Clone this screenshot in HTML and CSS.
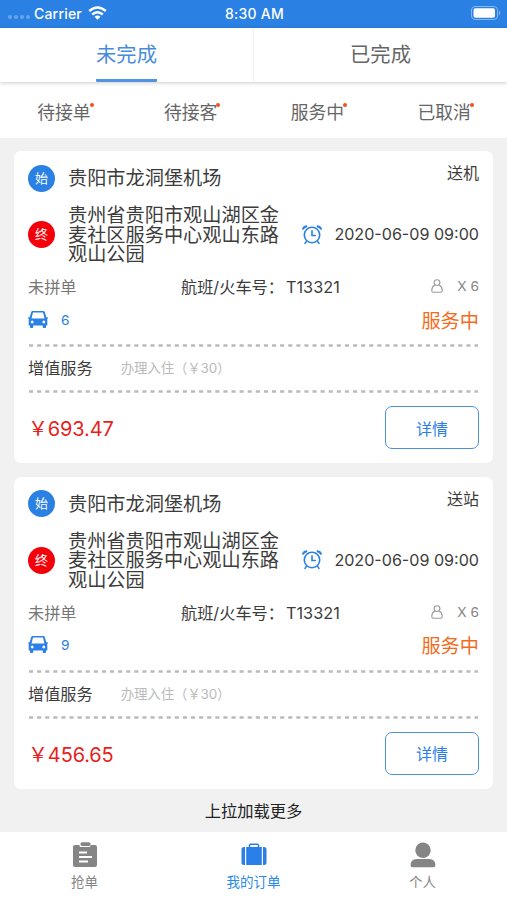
FILE: index.html
```html
<!DOCTYPE html>
<html lang="zh-CN">
<head>
<meta charset="utf-8">
<title>我的订单</title>
<link rel="stylesheet" href="styles.css">
</head>
<body>
<svg class="defs" width="0" height="0">
  <symbol id="clock" viewBox="0 0 20 20">
    <g fill="none" stroke="#2a80e6" stroke-width="1.6" stroke-linecap="round">
      <circle cx="10" cy="10" r="7.700"/>
      <path d="M10 5.800v4.700h3.400M4.200 16.600l-1.200 1.800M15.800 16.600l1.200 1.800"/>
      <path d="M1.200 3.600Q2 1.700 4.200 1.400M18.800 3.600Q18 1.700 15.800 1.400" stroke-width="2.300"/>
    </g>
  </symbol>
  <symbol id="car" viewBox="0 0 20 18">
    <path fill="#2a80e6" fill-rule="evenodd" d="M4.600 0h10.800q1.100 0 1.400 1l1.500 5.200h1.500v1.600h-.9q.4.500.4 1.200V14.600H18v1.600q0 .8-.8.8h-1.600q-.8 0-.8-.8v-1.600H5.200v1.600q0 .8-.8.8H2.800q-.8 0-.8-.8v-1.600H.7V9q0-.7.400-1.200H.2V6.200h1.500L3.200 1q.3-1 1.400-1zM5 1.600L3.500 7.400h13L15 1.600zM4.200 9.600a1.400 1.400 0 1 0 .01 0zM15.800 9.600a1.400 1.400 0 1 0 .01 0z"/>
  </symbol>
  <symbol id="rider" viewBox="0 0 12 14">
    <g fill="none" stroke="#999" stroke-width="1.100"><circle cx="6" cy="3.600" r="2.900"/><path d="M3.800 6.300Q.8 7.600.8 11v.8q0 1.400 1.400 1.400h7.600q1.400 0 1.400-1.400V11q0-3.400-3-4.700"/></g>
  </symbol>
</svg>
<header class="status">
  <div class="carrier"><i class="signal"><b></b><b></b><b></b><b></b></i><span>Carrier</span>
    <svg width="19" height="14" viewBox="0 0 19 14"><g fill="none" stroke="#fff" stroke-width="2.500"><path d="M1.200 5Q9.500-2 17.800 5"/><path d="M4.200 8.500Q9.500 4 14.800 8.500"/></g><path fill="#fff" d="M6.500 10.700Q9.500 8.300 12.500 10.700L9.500 13.700z"/></svg>
  </div>
  <div class="time">8:30 AM</div>
  <svg class="battery" width="30" height="14" viewBox="0 0 30 14"><rect x=".5" y=".5" width="26" height="13" rx="3.500" fill="none" stroke="#86b7f0"/><rect x="2.500" y="2.200" width="21.500" height="9.600" rx="1.800" fill="#fff"/><path d="M28 4.500q2.600 2.500 0 5z" fill="#86b7f0"/></svg>
</header>
<nav class="tabs"><div class="tab active"><span>未完成</span></div><div class="tab"><span>已完成</span></div></nav>
<nav class="filters"><div><span>待接单</span></div><div><span>待接客</span></div><div><span>服务中</span></div><div><span>已取消</span></div></nav>
<main>
  <article class="card">
    <div class="start"><i class="mark">始</i><span class="place">贵阳市龙洞堡机场</span><span class="kind">送机</span></div>
    <div class="end"><i class="mark red">终</i><span class="place">贵州省贵阳市观山湖区金麦社区服务中心观山东路观山公园</span><svg class="clock"><use href="#clock"/></svg><time>2020-06-09 09:00</time></div>
    <div class="trip"><span class="pool">未拼单</span><span class="flight">航班/火车号：<em>T13321</em></span><span class="count"><svg width="12" height="14"><use href="#rider"/></svg>X 6</span></div>
    <div class="seats"><svg width="20" height="18"><use href="#car"/></svg><span>6</span><strong>服务中</strong></div>
    <svg class="dash" width="451" height="3"><path d="M1 1.500H450"/></svg>
    <div class="extra"><span>增值服务</span><small>办理入住（￥30）</small></div>
    <svg class="dash" width="451" height="3"><path d="M1 1.500H450"/></svg>
    <div class="foot"><span class="price"><i>￥</i>693.47</span><button>详情</button></div>
  </article>
  <article class="card">
    <div class="start"><i class="mark">始</i><span class="place">贵阳市龙洞堡机场</span><span class="kind">送站</span></div>
    <div class="end"><i class="mark red">终</i><span class="place">贵州省贵阳市观山湖区金麦社区服务中心观山东路观山公园</span><svg class="clock"><use href="#clock"/></svg><time>2020-06-09 09:00</time></div>
    <div class="trip"><span class="pool">未拼单</span><span class="flight">航班/火车号：<em>T13321</em></span><span class="count"><svg width="12" height="14"><use href="#rider"/></svg>X 6</span></div>
    <div class="seats"><svg width="20" height="18"><use href="#car"/></svg><span>9</span><strong>服务中</strong></div>
    <svg class="dash" width="451" height="3"><path d="M1 1.500H450"/></svg>
    <div class="extra"><span>增值服务</span><small>办理入住（￥30）</small></div>
    <svg class="dash" width="451" height="3"><path d="M1 1.500H450"/></svg>
    <div class="foot"><span class="price"><i>￥</i>456.65</span><button>详情</button></div>
  </article>
  <p class="more">上拉加载更多</p>
</main>
<nav class="bottom">
  <div><svg width="26" height="26" viewBox="0 0 26 26"><path fill="#858585" fill-rule="evenodd" d="M3 3h4.500v.5q0 1.500 1.500 1.500h8q1.500 0 1.500-1.500V3H23q2 0 2 2v18q0 2-2 2H3q-2 0-2-2V5q0-2 2-2zM7 9.500v2h8v-2zM7 14v2h13v-2zM7 18.500v2h9v-2z"/><rect x="8.500" y=".3" width="10" height="3.700" rx="1.700" fill="#858585"/></svg><span>抢单</span></div>
  <div class="active"><svg width="26" height="26" viewBox="0 0 26 26"><g fill="#2a80e6"><path d="M4 5v18H3q-2.500 0-2.500-2.500v-13Q.5 5 3 5zM22 5v18h1q2.500 0 2.500-2.500v-13Q25.500 5 23 5z"/><rect x="5.200" y="5" width="15.600" height="18"/></g><path d="M8.500 5V3.300q0-1 1-1h7q1 0 1 1V5" fill="none" stroke="#2a80e6" stroke-width="1.500"/></svg><span>我的订单</span></div>
  <div><svg width="26" height="26" viewBox="0 0 26 26"><circle cx="13" cy="8.200" r="7.700" fill="#858585"/><path d="M.6 23.500Q.6 17 6.500 17h13q5.900 0 5.900 6.500 0 1.700-1.700 1.700H2.300q-1.700 0-1.700-1.700z" fill="#858585"/></svg><span>个人</span></div>
</nav>
</body>
</html>
```
FILE: styles.css
```css
* { box-sizing: border-box; }
body { margin: 0; width: 507px; height: 900px; overflow: hidden; display: flex; flex-direction: column; background: #f1f1f1; color: #3c3c3c; font-family: Inter, "Noto Sans CJK SC", sans-serif; }
i, em { font-style: normal; }
svg { display: block; flex: none; }
.defs { position: absolute; }
.status { height: 28px; flex: none; background: #2a80e3; color: #fff; display: grid; grid-template-columns: 1fr auto 1fr; align-items: center; padding: 0 6px 2px 8px; font-size: 14px; font-weight: 500; }
.time { letter-spacing: .25px; }
.carrier { display: flex; align-items: center; letter-spacing: .2px; }
.carrier svg { margin-left: 6px; }
.signal { display: flex; gap: 2px; width: 26px; padding-top: 8px; }
.signal b { width: 4px; height: 4px; border-radius: 50%; background: #6aa5ea; }
.battery { justify-self: end; }
.tabs { height: 54px; flex: none; display: flex; background: #fff; box-shadow: 0 1px 4px #0003; z-index: 1; }
.tab { flex: 1; display: flex; justify-content: center; font-size: 20.300px; color: #666; }
.tab + .tab { border-left: 1px solid #f0f0f0; }
.tab span { line-height: 53px; height: 54px; }
.tab.active { color: #478bdc; }
.tab.active span { border-bottom: 3px solid #5093e2; border-radius: 1px; }
.filters { height: 56px; flex: none; background: #fff; display: flex; font-size: 17.800px; color: #666; }
.filters div { flex: 1; text-align: center; line-height: 61px; padding-left: 1px; }
.filters span { position: relative; }
.filters span::after { content: ""; position: absolute; width: 4px; height: 4px; right: -3px; top: 1px; border-radius: 50%; background: #f4511e; }
main { flex: 1; min-height: 0; padding: 13px 14px 0; }
.card { height: 312px; background: #fff; border-radius: 7px; padding: 13px 14px 0; margin-bottom: 13.500px; display: flex; flex-direction: column; }
.start { height: 28px; display: flex; align-items: center; }
.mark { width: 27px; height: 27px; border-radius: 50%; background: #2a80e3; color: #fff; font-size: 13px; line-height: 26px; text-align: center; margin-right: 13px; flex: none; }
.mark.red { background: #f3000b; }
.place { font-size: 19.200px; line-height: 19.500px; padding-top: 2px; }
.kind { margin-left: auto; font-size: 16px; transform: translateY(-6px); }
.end { height: 59px; margin-top: 13px; display: flex; align-items: center; }
.end .place { width: 216px; }
.clock { width: 20px; height: 20px; margin-left: 18px; }
time { margin-left: auto; font-size: 16.100px; line-height: 20px; padding-bottom: 1px; white-space: nowrap; }
.trip { height: 24px; margin-top: 10px; display: grid; grid-template-columns: 153px 1fr auto; align-items: center; font-size: 16.200px; white-space: nowrap; }
.trip em { margin-left: 2px; font-size: 16.300px; }
.pool { color: #777; }
.count { display: flex; gap: 14px; align-items: center; font-size: 13.700px; color: #858585; }
.seats { height: 43px; display: flex; align-items: center; color: #2a80e3; font-size: 13.700px; }
.seats span { margin-left: 13px; }
.seats strong { margin-left: auto; color: #f36b1c; font-size: 19.200px; font-weight: 400; }
.dash path { stroke: #bbb; stroke-width: 2.300; stroke-dasharray: 4.100 4; }
.dash { margin-top: 3px; }
.extra { height: 40px; display: flex; align-items: center; font-size: 16.200px; }
.extra small { margin-left: 28px; font-size: 13.500px; color: #bbb; letter-spacing: -.2px; }
.foot { display: flex; align-items: center; justify-content: space-between; margin-top: 13px; }
.price { font-size: 20px; letter-spacing: -.15px; color: #e81e20; }
button { width: 94px; height: 43px; background: #fff; border: 1.500px solid #4c92e2; border-radius: 7px; color: #2a80e3; font: 16px "Noto Sans CJK SC", sans-serif; }
.more { margin: -3px 0 0; text-align: center; color: #222; font-size: 16.300px; line-height: 24px; }
.bottom { height: 68px; flex: none; background: #fff; display: flex; }
.bottom div { flex: 1; display: flex; flex-direction: column; align-items: center; padding-top: 10px; font-size: 13.500px; line-height: 20px; color: #858585; }
.bottom span { margin-top: 4px; }
.bottom .active { color: #2a8be8; }
```
